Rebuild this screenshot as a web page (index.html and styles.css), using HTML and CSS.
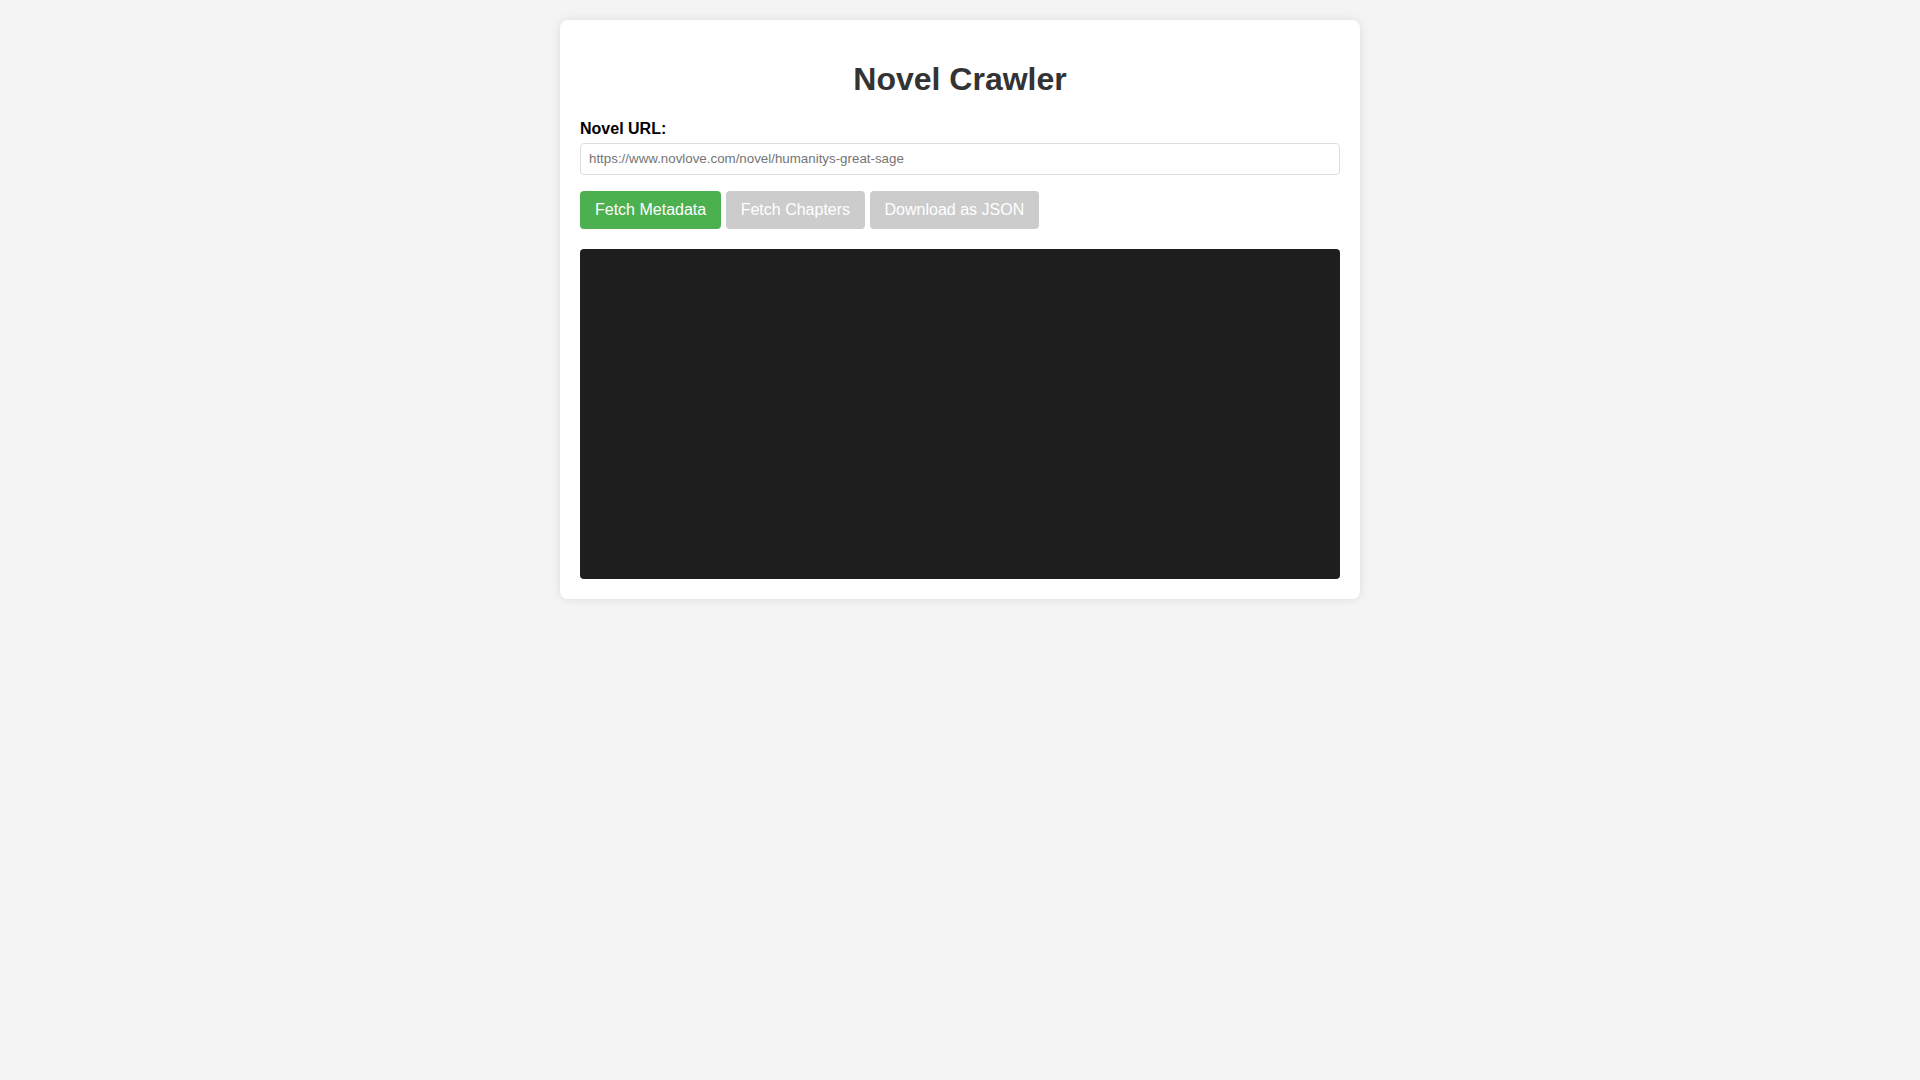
FILE: index.html
```html
<!DOCTYPE html>
<html lang="en">
<head>
<meta charset="utf-8">
<title>Novel Crawler</title>
<link rel="stylesheet" href="styles.css">
</head>
<body>
<div class="card">
  <h1 class="title">Novel Crawler</h1>
  <label class="label" for="url">Novel URL:</label>
  <input class="url-input" id="url" type="text" placeholder="https://www.novlove.com/novel/humanitys-great-sage">
  <div class="actions">
    <button class="btn btn-primary">Fetch Metadata</button>
    <button class="btn btn-disabled" disabled>Fetch Chapters</button>
    <button class="btn btn-disabled" disabled>Download as JSON</button>
  </div>
  <div class="log"></div>
</div>
</body>
</html>
```

FILE: styles.css
```css
html, body {
  margin: 0;
  padding: 0;
}
body {
  background: #f4f4f4;
  font-family: "Liberation Sans", Arial, sans-serif;
  font-size: 16px;
  color: #000;
  padding: 20px 0;
}
.card {
  box-sizing: border-box;
  width: 800px;
  margin: 0 auto;
  background: #fff;
  padding: 20px;
  border-radius: 8px;
  box-shadow: 0 0 10px rgba(0, 0, 0, 0.1);
}
.title {
  text-align: center;
  color: #333;
  font-size: 32px;
  font-weight: bold;
  margin: 21.44px 0 21.44px;
}
.label {
  display: block;
  font-weight: bold;
  font-size: 16px;
  margin-bottom: 5px;
}
.url-input {
  display: block;
  box-sizing: border-box;
  width: 100%;
  height: 32px;
  padding: 0 8px;
  border: 1px solid #ddd;
  border-radius: 4px;
  font-family: "Liberation Sans", Arial, sans-serif;
  font-size: 13.33px;
  color: #333;
  margin: 0 0 16.5px;
}
.url-input::placeholder {
  color: #757575;
}
.actions {
  display: flex;
  gap: 4.5px;
  margin-bottom: 20px;
}
.btn {
  font-family: "Liberation Sans", Arial, sans-serif;
  font-size: 16px;
  line-height: 18px;
  padding: 10px 15px 9.7px;
  border: none;
  border-radius: 4px;
  color: #fff;
  cursor: pointer;
}
.btn-primary {
  background: #4caf50;
}
.btn-disabled {
  background: #cccccc;
  cursor: not-allowed;
}
.log {
  box-sizing: border-box;
  height: 330px;
  background: #1e1e1e;
  border-radius: 4px;
}
```
